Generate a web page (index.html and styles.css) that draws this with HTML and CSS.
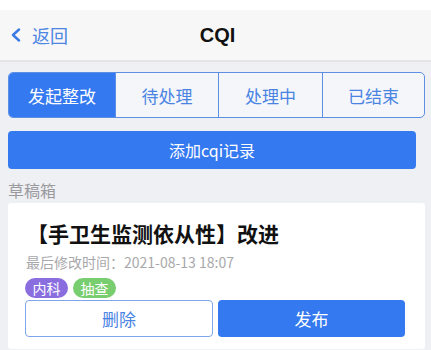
FILE: index.html
```html
<!DOCTYPE html>
<html lang="zh">
<head>
<meta charset="utf-8">
<title>CQI</title>
<link rel="stylesheet" href="styles.css">
</head>
<body>
<div class="status"></div>
<header class="nav">
  <a class="back">
    <svg class="chev" width="12" height="14" viewBox="0 0 12 14"><path d="M9 1.5 L3 7 L9 12.5" fill="none" stroke="#3a7ae6" stroke-width="2.4" stroke-linecap="round" stroke-linejoin="round"/></svg>
    <span>返回</span>
  </a>
  <div class="title">CQI</div>
</header>
<main class="content">
  <div class="tabs">
    <div class="tab active">发起整改</div>
    <div class="tab">待处理</div>
    <div class="tab">处理中</div>
    <div class="tab">已结束</div>
  </div>
  <div class="add">添加cqi记录</div>
  <div class="section">草稿箱</div>
  <div class="card">
    <div class="card-title">【手卫生监测依从性】改进</div>
    <div class="time">最后修改时间：2021-08-13 18:07</div>
    <div class="tags">
      <span class="tag purple">内科</span>
      <span class="tag green">抽查</span>
    </div>
    <div class="actions">
      <div class="btn outline">删除</div>
      <div class="btn solid">发布</div>
    </div>
  </div>
</main>
</body>
</html>
```
FILE: styles.css
```css
* { box-sizing: border-box; }
html, body { margin: 0; padding: 0; }
body {
  width: 431px;
  height: 350px;
  overflow: hidden;
  background: #eff0f4;
  font-family: "Noto Sans CJK SC", "Noto Sans", sans-serif;
}
.status { height: 10px; background: #ffffff; }
.nav {
  height: 52px;
  background: #f7f7f7;
  border-bottom: 2px solid #e4e4e8;
  position: relative;
  display: flex;
  align-items: center;
}
.back {
  display: flex;
  align-items: center;
  gap: 10px;
  padding-left: 10px;
  color: #4d86e3;
  font-size: 18px;
  line-height: 24px;
}
.chev { display: block; }
.title {
  position: absolute;
  left: 0; right: 0; top: 0; bottom: 0;
  display: flex;
  align-items: center;
  justify-content: center;
  font-family: "Liberation Sans", sans-serif;
  font-weight: bold;
  font-size: 20px;
  color: #111;
  pointer-events: none;
  padding-left: 4px;
}
.content { padding: 10px 6px 0 8px; }
.tabs {
  display: grid;
  grid-template-columns: 106px 103px 104px 1fr;
  height: 46px;
  border: 1px solid #5d90e4;
  border-radius: 5px;
  overflow: hidden;
  background: #f5f6fa;
}
.tab {
  display: flex;
  align-items: center;
  justify-content: center;
  font-size: 17px;
  color: #4a84e3;
  border-left: 1px solid #5d90e4;
}
.tab:first-child { border-left: none; }
.tab.active { background: #3579f1; color: #ffffff; }
.add {
  margin-top: 13px;
  margin-right: 9px;
  height: 38px;
  border-radius: 4px;
  background: #3579f1;
  color: #ffffff;
  font-size: 16px;
  display: flex;
  align-items: center;
  justify-content: center;
}
.section {
  padding-top: 8px;
  line-height: 26px;
  font-size: 16px;
  color: #9a9a9e;
}
.card {
  background: #ffffff;
  padding: 16px 20px 12px 17px;
  border-radius: 3px;
}
.card-title {
  font-size: 21px;
  font-weight: bold;
  line-height: 28px;
  color: #111;
  margin-left: 2px;
}
.time {
  margin-top: 5px;
  line-height: 20px;
  font-size: 14px;
  color: #a8a8ab;
  font-family: "Noto Sans CJK SC", sans-serif;
  margin-left: 1px;
}
.tags {
  margin-top: 6px;
  display: flex;
  gap: 5px;
  height: 20px;
}
.tag {
  width: 43px;
  height: 20px;
  border-radius: 10px;
  color: #ffffff;
  font-size: 14px;
  display: flex;
  align-items: center;
  justify-content: center;
}
.tag.purple { background: #8a6ee0; }
.tag.green { background: #78cd6e; }
.actions {
  margin-top: 2px;
  display: grid;
  grid-template-columns: 188px 1fr;
  gap: 5px;
}
.btn {
  height: 37px;
  border-radius: 4px;
  display: flex;
  align-items: center;
  justify-content: center;
  font-size: 17px;
}
.btn.outline {
  border: 1.5px solid #7ea6ea;
  color: #4a84e3;
  background: #fff;
}
.btn.solid { background: #3579f1; color: #ffffff; }
```
